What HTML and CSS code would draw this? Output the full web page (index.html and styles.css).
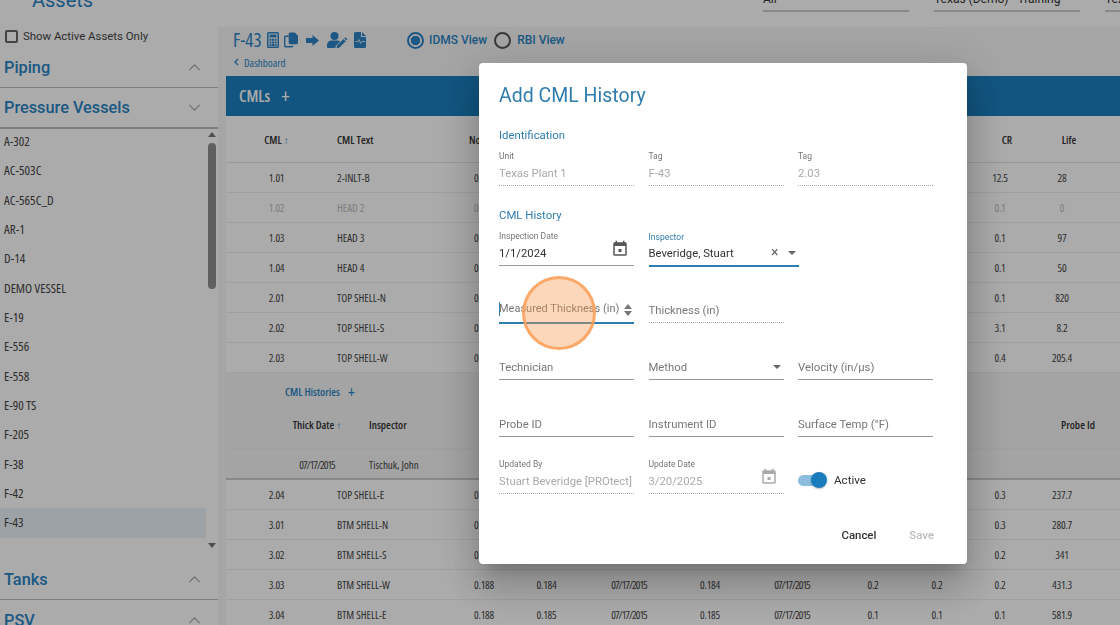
FILE: index.html
```html
<!DOCTYPE html>
<html lang="en">
<head>
<meta charset="utf-8">
<title>Add CML History</title>
<link rel="stylesheet" href="styles.css">
</head>
<body>
<div class="page">
  <header class="topbar">
    <h1 class="app-title">Assets</h1>
    <div class="selects">
      <div class="select">All</div>
      <div class="select">Texas (Demo) - Training</div>
      <div class="select select-cut">Texas</div>
    </div>
  </header>
  <div class="columns">
    <aside class="sidebar">
      <label class="check-row"><span class="checkbox"></span>Show Active Assets Only</label>
      <div class="acc-head"><span>Piping</span><svg class="chev" viewBox="0 0 14 8"><path d="M1 7l6-6 6 6"/></svg></div>
      <div class="acc-head acc-open"><span>Pressure Vessels</span><svg class="chev" viewBox="0 0 14 8"><path d="M1 1l6 6 6-6"/></svg></div>
      <div class="list-wrap">
        <ul class="asset-list">
          <li>A-302</li><li>AC-503C</li><li>AC-565C_D</li><li>AR-1</li><li>D-14</li><li>DEMO VESSEL</li><li>E-19</li><li>E-556</li><li>E-558</li><li>E-90 TS</li><li>F-205</li><li>F-38</li><li>F-42</li><li class="selected">F-43</li><li>F-43A</li>
        </ul>
        <div class="scrollbar">
          <span class="arrow-up"></span>
          <span class="thumb"></span>
          <span class="arrow-down"></span>
        </div>
      </div>
      <div class="acc-head"><span>Tanks</span><svg class="chev" viewBox="0 0 14 8"><path d="M1 7l6-6 6 6"/></svg></div>
      <div class="acc-head"><span>PSV</span><svg class="chev" viewBox="0 0 14 8"><path d="M1 7l6-6 6 6"/></svg></div>
    </aside>
    <main class="main">
      <div class="title-row">
        <span class="tag-title">F-43</span>
        <svg class="ic ic-calc" viewBox="0 0 12 16"><path fill-rule="evenodd" d="M1.500 0h9A1.500 1.500 0 0 1 12 1.500v13a1.500 1.500 0 0 1-1.500 1.500h-9A1.500 1.500 0 0 1 0 14.500v-13A1.500 1.500 0 0 1 1.500 0zM1.500 1.500v13h9v-13zM2.500 2.500h7v3h-7zM2.500 6.800h2v2h-2zM5 6.800h2v2H5zM7.500 6.800h2v2h-2zM2.500 9.400h2v2h-2zM5 9.400h2v2H5zM7.500 9.400h2v2h-2zM2.500 12h2v2h-2zM5 12h2v2H5zM7.500 12h2v2h-2z"/></svg>
        <svg class="ic ic-copy" viewBox="0 0 15 16"><path d="M5 3.200h-3.400A1.600 1.600 0 0 0 0 4.800v9.600A1.600 1.600 0 0 0 1.600 16h6.800a1.600 1.600 0 0 0 1.600-1.600v-.6H8.500v.7H1.500V4.700H5z"/><path d="M6.500 0h5l3.500 3.500v7.500a1.500 1.500 0 0 1-1.500 1.500h-7A1.500 1.500 0 0 1 5 11V1.500A1.500 1.500 0 0 1 6.500 0z"/></svg>
        <svg class="ic ic-arrow" viewBox="0 0 13 11"><path d="M0 3h6.500V0L13 5.500 6.500 11V8H0z"/></svg>
        <svg class="ic ic-user" viewBox="0 0 21 16"><circle cx="7.500" cy="4" r="4"/><path d="M0 15v-2a4.500 4.500 0 0 1 4.500-4.500h6c1 0 2 .3 2.700 .9L8.800 13.800 8.400 16H1a1 1 0 0 1-1-1z"/><path d="M10 13.500l6.500-6.500 2.200 2.200-6.500 6.500-2.700 .5zM17.300 6.200l1-1 2.200 2.200-1 1z"/></svg>
        <svg class="ic ic-file" viewBox="0 0 12 16"><path d="M1.500 0H7v4.500a.5 .5 0 0 0 .5 .5H12v9.500a1.500 1.500 0 0 1-1.500 1.500h-9A1.500 1.500 0 0 1 0 14.500v-13A1.500 1.500 0 0 1 1.500 0zM8 0l4 4H8z"/><path class="pulse" d="M1.500 9.500h2.500l1-2 1.500 4 1.200-2h3.300"/></svg>
        <span class="radio radio-on"></span><span class="radio-label">IDMS View</span>
        <span class="radio"></span><span class="radio-label">RBI View</span>
      </div>
      <div class="crumb"><svg class="crumb-chev" viewBox="0 0 6 8"><path d="M5 1L2 4l3 3"/></svg>Dashboard</div>
      <section class="panel">
        <div class="panel-bar"><span>CMLs</span><span class="plus">+</span></div>
        <div class="tr th">
          <span>CML <i class="sort">↑</i></span><span class="left">CML Text</span><span class="nom">Nom</span><span class="c-cr hd-off">CR</span><span class="c-life hd-off">Life</span>
        </div>
        <div class="tr"><span>1.01</span><span class="left">2-INLT-B</span><span>0.188</span><span class="c-cr">12.5</span><span class="c-life">28</span></div>
        <div class="tr off"><span>1.02</span><span class="left">HEAD 2</span><span>0.188</span><span class="c-cr">0.1</span><span class="c-life">0</span></div>
        <div class="tr"><span>1.03</span><span class="left">HEAD 3</span><span>0.188</span><span class="c-cr">0.1</span><span class="c-life">97</span></div>
        <div class="tr"><span>1.04</span><span class="left">HEAD 4</span><span>0.188</span><span class="c-cr">0.1</span><span class="c-life">50</span></div>
        <div class="tr"><span>2.01</span><span class="left">TOP SHELL-N</span><span>0.188</span><span class="c-cr">0.1</span><span class="c-life">820</span></div>
        <div class="tr"><span>2.02</span><span class="left">TOP SHELL-S</span><span>0.188</span><span class="c-cr">3.1</span><span class="c-life">8.2</span></div>
        <div class="tr"><span>2.03</span><span class="left">TOP SHELL-W</span><span>0.188</span><span class="c-cr">0.4</span><span class="c-life">205.4</span></div>
        <div class="sub">
          <div class="sub-title">CML Histories <span class="sub-plus">+</span></div>
          <div class="sub-row sub-head"><span>Thick Date <i class="sort">↑</i></span><span>Inspector</span><span>Probe Id</span></div>
          <div class="sub-row"><span class="date">07/17/2015</span><span>Tischuk, John</span><span></span></div>
        </div>
        <div class="tr"><span>2.04</span><span class="left">TOP SHELL-E</span><span>0.188</span><span class="c-cr">0.3</span><span class="c-life">237.7</span></div>
        <div class="tr"><span>3.01</span><span class="left">BTM SHELL-N</span><span>0.188</span><span class="c-cr">0.3</span><span class="c-life">280.7</span></div>
        <div class="tr"><span>3.02</span><span class="left">BTM SHELL-S</span><span>0.188</span><span class="c-cr">0.2</span><span class="c-life">341</span></div>
        <div class="tr"><span>3.03</span><span class="left">BTM SHELL-W</span><span>0.188</span><span>0.184</span><span class="date">07/17/2015</span><span>0.184</span><span class="date">07/17/2015</span><span>0.2</span><span>0.2</span><span>0.2</span><span>431.3</span></div>
        <div class="tr"><span>3.04</span><span class="left">BTM SHELL-E</span><span>0.188</span><span>0.185</span><span class="date">07/17/2015</span><span>0.185</span><span class="date">07/17/2015</span><span>0.1</span><span>0.1</span><span>0.1</span><span>581.9</span></div>
      </section>
    </main>
  </div>
</div>

<div class="overlay">
  <div class="modal">
    <h2 class="modal-title">Add CML History</h2>
    <h3 class="section">Identification</h3>
    <div class="form-row">
      <div class="field dotted"><label>Unit</label><div class="value muted">Texas Plant 1</div></div>
      <div class="field dotted"><label>Tag</label><div class="value muted">F-43</div></div>
      <div class="field dotted"><label>Tag</label><div class="value muted">2.03</div></div>
    </div>
    <h3 class="section section-2">CML History</h3>
    <div class="form-row">
      <div class="field">
        <label>Inspection Date</label>
        <div class="value">1/1/2024<svg class="cal" viewBox="0 0 24 24"><path d="M19 3h-1V1h-2v2H8V1H6v2H5a2 2 0 0 0-2 2v14a2 2 0 0 0 2 2h14a2 2 0 0 0 2-2V5a2 2 0 0 0-2-2zm0 16H5V8h14zM10 12h4v4h-4z"/></svg></div>
      </div>
      <div class="field focus field-wide">
        <label class="label-focus">Inspector</label>
        <div class="value">Beveridge, Stuart<span class="clear">×</span><span class="caret caret-insp"></span></div>
      </div>
      <div class="spacer"></div>
    </div>
    <div class="form-row">
      <div class="field focus">
        <div class="value ph ph-focus"><span class="text-caret"></span>Measured Thickness (in)<span class="spin"><i class="spin-up"></i><i class="spin-down"></i></span></div>
      </div>
      <div class="field dotted"><div class="value ph">Thickness (in)</div></div>
      <div class="spacer"></div>
    </div>
    <div class="form-row">
      <div class="field"><div class="value ph">Technician</div></div>
      <div class="field"><div class="value ph">Method<span class="caret"></span></div></div>
      <div class="field"><div class="value ph">Velocity (in/µs)</div></div>
    </div>
    <div class="form-row">
      <div class="field"><div class="value ph">Probe ID</div></div>
      <div class="field"><div class="value ph">Instrument ID</div></div>
      <div class="field"><div class="value ph">Surface Temp (°F)</div></div>
    </div>
    <div class="form-row">
      <div class="field dotted"><label>Updated By</label><div class="value muted nowrap">Stuart Beveridge [PROtect]</div></div>
      <div class="field dotted"><label>Update Date</label><div class="value muted">3/20/2025<svg class="cal cal-off" viewBox="0 0 24 24"><path d="M19 3h-1V1h-2v2H8V1H6v2H5a2 2 0 0 0-2 2v14a2 2 0 0 0 2 2h14a2 2 0 0 0 2-2V5a2 2 0 0 0-2-2zm0 16H5V8h14zM10 12h4v4h-4z"/></svg></div></div>
      <div class="toggle-wrap"><span class="toggle"><span class="knob"></span></span><span class="toggle-label">Active</span></div>
    </div>
    <div class="actions">
      <button class="btn">Cancel</button>
      <button class="btn btn-off">Save</button>
    </div>
  </div>
  <div class="pointer"></div>
</div>
</body>
</html>
```

FILE: styles.css
```css
* { box-sizing: border-box; }
html, body { margin: 0; padding: 0; height: 625px; overflow: hidden; }
body { font-family: Roboto, "Liberation Sans", sans-serif; color: #333; background: #fff; }
ul { list-style: none; margin: 0; padding: 0; }
h1, h2, h3 { margin: 0; font-weight: 400; }

.page { margin-top: -20px; }

/* header */
.topbar { height: 47px; display: flex; padding-left: 32px; background: #fff; }
.app-title { padding-top: 7px; font-size: 20px; line-height: 26px; color: #2a84c4; }
.selects { margin-left: auto; display: flex; gap: 25px; }
.select { width: 146px; height: 32px; padding-top: 12px; font-size: 12px; line-height: 14px; border-bottom: 2px solid #ccc; color: #333; white-space: nowrap; overflow: hidden; }
.select-cut { width: 15px; }

.columns { display: flex; height: 598px; }

/* sidebar */
.sidebar { width: 218px; flex: none; background: #fff; }
.check-row { height: 20px; display: flex; align-items: center; gap: 5px; padding: 0 0 2px 5px; font-size: 11.400px; color: #444; }
.checkbox { width: 13px; height: 13px; border: 2px solid #666; border-radius: 2px; }
.acc-head { height: 41px; display: flex; align-items: center; justify-content: space-between; padding: 1px 17px 0 4px; border-bottom: 1px solid #bbb; font-size: 16.300px; font-weight: 500; color: #2a84c4; }
.acc-open { padding-top: 0; border-bottom: 2px solid #bbb; }
.chev { width: 13px; height: 7px; fill: none; stroke: #aaa; stroke-width: 1.500; }
.list-wrap { height: 430px; display: flex; padding-bottom: 11px; }
.asset-list { width: 206px; height: 421px; margin-top: -2px; overflow: hidden; }
.asset-list li { height: 29.330px; line-height: 29px; padding-left: 4px; font-family: "Open Sans", sans-serif; font-stretch: 75%; font-size: 13px; color: #444; }
.asset-list .selected { background: #eaf2f8; }
.scrollbar { width: 12px; display: flex; flex-direction: column; align-items: center; padding-top: 3px; }
.arrow-up { border: 4px solid transparent; border-top: 0; border-bottom: 5px solid #777; }
.thumb { width: 8px; height: 146px; margin-top: 6px; background: #8e8e8e; border-radius: 4px; }
.arrow-down { margin-top: auto; border: 4px solid transparent; border-bottom: 0; border-top: 5px solid #777; }

/* main */
.main { flex: 1; min-width: 0; background: #f6f6f6; overflow: hidden; }
.title-row { height: 26px; padding-left: 15px; display: flex; align-items: center; color: #2a84c4; }
.tag-title { width: 34px; font-family: "Open Sans", sans-serif; font-stretch: 75%; font-size: 19px; font-weight: 500; }
.ic { fill: #2a84c4; flex: none; }
.ic-calc { width: 12px; height: 16px; }
.ic-copy { width: 14px; height: 16px; margin-left: 5px; }
.ic-arrow { width: 13px; height: 11px; margin-left: 8px; }
.ic-user { width: 21px; height: 16px; margin-left: 8px; }
.ic-file { width: 12px; height: 16px; margin-left: 6px; }
.pulse { fill: none; stroke: #f6f6f6; stroke-width: .8; }
.radio { width: 17px; height: 17px; margin-left: 7px; border: 2px solid #555; border-radius: 50%; flex: none; }
.radio-on { margin-left: 41px; border-color: #2a84c4; background: radial-gradient(circle, #2a84c4 0 4.500px, transparent 5px); }
.radio-label { margin-left: 5px; font-size: 12px; font-weight: 500; color: #2a84c4; }
.radio + .radio-label + .radio + .radio-label { margin-left: 6px; }
.crumb { height: 23px; padding: 0 0 5px 15px; display: flex; align-items: center; gap: 5px; font-family: "Open Sans", sans-serif; font-stretch: 75%; font-size: 11px; color: #2a84c4; }
.crumb-chev { width: 6px; height: 8px; fill: none; stroke: #2a84c4; stroke-width: 1.300; }

.panel { margin-left: 8px; }
.panel-bar { height: 40px; display: flex; align-items: center; gap: 11px; padding-left: 13px; background: #1a7fbf; color: #fff; font-family: "Open Sans", sans-serif; font-stretch: 75%; font-size: 16px; font-weight: 600; }
.plus { font-size: 20px; font-weight: 400; line-height: 20px; }

.tr { height: 30px; display: grid; grid-template-columns: 101px 123px 68px 57px 108px 54px 110px 52px 76px 50px 74px; align-items: center; justify-items: center; border-bottom: 1px solid #eee; background: #fff; font-family: "Open Sans", sans-serif; font-stretch: 75%; font-size: 11px; letter-spacing: -.25px; color: #444; }
.tr .left { justify-self: start; padding-left: 10px; letter-spacing: 0; }
.tr .date, .sub .date { letter-spacing: -1px; }
.tr.off { color: #bbb; }
.th { height: 47px; font-weight: 600; letter-spacing: 0; color: #333; border-bottom-color: #e4e4e4; }
.th .nom { justify-self: start; padding-left: 19px; }
.c-cr { grid-column: 10; }
.c-life { grid-column: 11; }
.hd-off { padding-left: 14px; }
.sort { font-style: normal; font-size: 10px; color: #2a84c4; }

.sub { height: 107px; background: #f5f5f5; border-bottom: 2px solid #ccc; font-family: "Open Sans", sans-serif; font-stretch: 75%; color: #444; font-size: 11px; }
.sub-title { height: 37px; padding-left: 59px; display: flex; align-items: center; gap: 8px; color: #2a84c4; font-weight: 600; font-size: 11px; }
.sub-plus { font-size: 16px; font-weight: 400; line-height: 16px; }
.sub-row { height: 30px; display: grid; grid-template-columns: 70px 1fr 76px; column-gap: 17px; padding: 0 4px 0 56px; align-items: center; }
.sub-row span:first-child, .sub-row span:last-child { text-align: center; }
.sub-head { height: 39px; align-items: start; padding-top: 7px; font-weight: 600; color: #333; border-bottom: 1px solid #efefef; }

/* overlay + modal */
.overlay { position: fixed; inset: 0; padding: 63px 0 0 479px; background: rgba(0, 0, 0, .33); }
.modal { width: 488px; height: 501px; padding: 21px 0 0 20px; background: #fff; border-radius: 4px; box-shadow: 0 11px 15px -7px rgba(0,0,0,.2), 0 24px 38px 3px rgba(0,0,0,.14), 0 9px 46px 8px rgba(0,0,0,.12); }
.modal-title { height: 23px; font-size: 19.500px; line-height: 24px; color: #2f7dae; }
.section { height: 20px; margin-top: 18px; font-size: 11.400px; line-height: 20px; color: #2f7dae; }
.section-2 { margin-top: 19px; }
.form-row { display: grid; grid-template-columns: 135px 135px 135px; column-gap: 14.500px; height: 36px; margin-top: 21px; }
.section + .form-row { margin-top: 5px; }
.field { position: relative; display: flex; flex-direction: column; justify-content: flex-end; border-bottom: 1px solid #9a9a9a; }
.field label { font-size: 8.500px; line-height: 12px; color: #777; }
.field .label-focus { margin-bottom: -1px; color: #2f7dae; }
.dotted { border-bottom: 1px dotted #aaa; }
.focus { margin-bottom: -1px; border-bottom: 2px solid #2f7dae; }
.field-wide { width: 150px; }
.value { position: relative; display: flex; align-items: center; height: 23px; font-size: 11.300px; color: #333; }
.muted { color: #aaa; }
.ph { color: #777; }
.nowrap { white-space: nowrap; }
.ph-focus { height: 26px; padding-bottom: 1px; font-size: 11px; }
.text-caret { width: 1px; height: 14px; margin-right: -1px; background: #2f7dae; }
.cal { position: absolute; right: 5px; top: -2px; width: 18px; height: 18px; fill: #555; }
.cal-off { right: 6px; fill: #aaa; }
.clear { position: absolute; right: 20px; top: 3px; font-size: 14px; line-height: 14px; color: #666; }
.caret { position: absolute; right: 3px; top: 9px; border: 4.500px solid transparent; border-top: 4.500px solid #666; border-bottom: 0; }
.spin { position: absolute; right: 2px; top: 8px; width: 8px; display: flex; flex-direction: column; gap: 2px; }
.spin-up { border: 4px solid transparent; border-top: 0; border-bottom: 5px solid #777; }
.spin-down { border: 4px solid transparent; border-bottom: 0; border-top: 5px solid #777; }

.toggle-wrap { display: flex; align-items: center; gap: 8px; padding-top: 8px; height: 36px; }
.toggle { position: relative; width: 28px; height: 11px; border-radius: 6px; background: #8cbcde; }
.knob { position: absolute; right: -1px; top: -3px; width: 16px; height: 16px; border-radius: 50%; background: #1a7bbd; box-shadow: 0 1px 2px rgba(0,0,0,.25); }
.toggle-label { font-size: 11.600px; color: #333; }

.actions { display: flex; justify-content: flex-end; gap: 33px; margin-top: 31px; padding-right: 33px; }
.btn { border: 0; padding: 0; background: none; font-family: Roboto, sans-serif; font-size: 11.400px; font-weight: 500; color: #333; line-height: 20px; }
.btn-off { color: #bbb; }

.pointer { position: absolute; left: 522px; top: 276px; width: 74px; height: 74px; border-radius: 50%; border: 3px solid rgba(250, 160, 90, .85); background: rgba(250, 150, 70, .38); }
```
